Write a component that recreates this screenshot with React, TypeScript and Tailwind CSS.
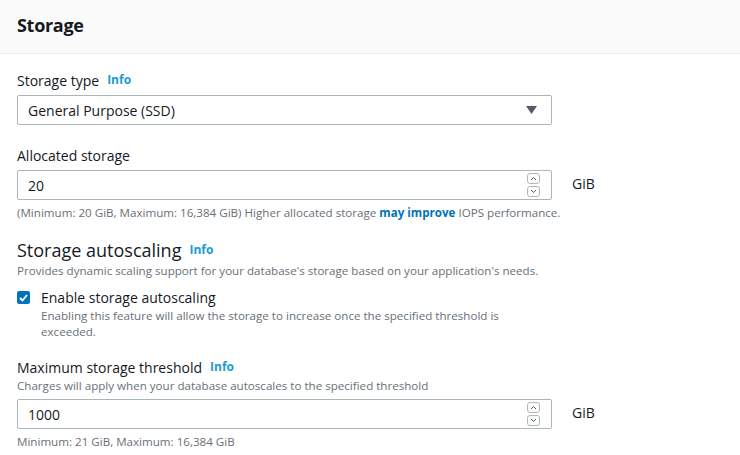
import React from "react";

const Info: React.FC = () => (
  <span className="ml-2 text-[12px] font-bold text-[#1a9bd3]">Info</span>
);

const Spinner: React.FC = () => (
  <div className="flex flex-col gap-[2px]">
    <div className="w-[13px] h-[11px] rounded-[3px] border border-[#b0b7bb] flex items-center justify-center">
      <svg width="7" height="5" viewBox="0 0 7 5"><path d="M1 4 L3.5 1.5 L6 4" stroke="#545b64" strokeWidth="1" fill="none" /></svg>
    </div>
    <div className="w-[13px] h-[11px] rounded-[3px] border border-[#b0b7bb] flex items-center justify-center">
      <svg width="7" height="5" viewBox="0 0 7 5"><path d="M1 1 L3.5 3.5 L6 1" stroke="#545b64" strokeWidth="1" fill="none" /></svg>
    </div>
  </div>
);

const NumberField: React.FC<{ value: string }> = ({ value }) => (
  <div className="flex items-start">
    <div className="w-[535px] h-[30px] border border-[#aab7b8] rounded-[2px] flex items-center justify-between pl-[10px] pr-[11px] text-[14px] text-[#16191f]">
      <span>{value}</span>
      <Spinner />
    </div>
    <span className="ml-[20px] mt-[3px] text-[14px] text-[#16191f]">GiB</span>
  </div>
);

const App: React.FC = () => {
  return (
    <div className="w-[740px] h-[455px] bg-white overflow-hidden text-[#16191f]" style={{ fontFamily: '"Open Sans", "Noto Sans", sans-serif' }}>
      <div className="h-[54px] bg-[#fafafa] border-b border-[#eaeded] flex items-center px-[17px]">
        <h1 className="text-[18px] font-bold tracking-[-0.3px] text-[#16191f] mt-[-2px]">Storage</h1>
      </div>

      <div className="px-[17px] pt-[16px]">
        <div className="flex items-center h-[20px] text-[14px]">
          Storage type <Info />
        </div>
        <div className="mt-[5px] w-[535px] h-[30px] border border-[#aab7b8] rounded-[2px] flex items-center justify-between pl-[10px] pr-[14px] text-[14px]">
          <span>General Purpose (SSD)</span>
          <svg width="11" height="8" viewBox="0 0 11 8"><path d="M0 0 H11 L5.5 8 Z" fill="#545b64" /></svg>
        </div>

        <div className="mt-[20px] flex items-center h-[20px] text-[14px]">Allocated storage</div>
        <div className="mt-[5px]">
          <NumberField value="20" />
        </div>
        <p className="mt-[5px] text-[11.6px] text-[#687078] leading-[16px]">
          (Minimum: 20 GiB, Maximum: 16,384 GiB) Higher allocated storage{" "}
          <span className="font-bold text-[#0073bb]">may improve</span> IOPS performance.
        </p>

        <div className="mt-[17px] flex items-center h-[24px] text-[18px]">
          Storage autoscaling <Info />
        </div>
        <p className="text-[11.6px] text-[#687078] leading-[16px] mt-[1px]">
          Provides dynamic scaling support for your database's storage based on your application's needs.
        </p>

        <div className="mt-[9px] flex items-start">
          <div className="w-[13px] h-[13px] mt-[3px] rounded-[2px] bg-[#0073bb] flex items-center justify-center">
            <svg width="9" height="8" viewBox="0 0 9 8"><path d="M1 4 L3.5 6.5 L8 1" stroke="white" strokeWidth="1.8" fill="none" /></svg>
          </div>
          <div className="ml-[11px]">
            <div className="text-[14px] leading-[20px]">Enable storage autoscaling</div>
            <p className="w-[475px] text-[11.6px] text-[#687078] leading-[16px]">
              Enabling this feature will allow the storage to increase once the specified threshold is exceeded.
            </p>
          </div>
        </div>

        <div className="mt-[17px] flex items-center h-[20px] text-[14px]">
          Maximum storage threshold <Info />
        </div>
        <p className="text-[11.6px] text-[#687078] leading-[16px] mt-[1px]">
          Charges will apply when your database autoscales to the specified threshold
        </p>
        <div className="mt-[5px]">
          <NumberField value="1000" />
        </div>
        <p className="mt-[5px] text-[11.6px] text-[#687078] leading-[16px]">Minimum: 21 GiB, Maximum: 16,384 GiB</p>
      </div>
    </div>
  );
};

export default App;
